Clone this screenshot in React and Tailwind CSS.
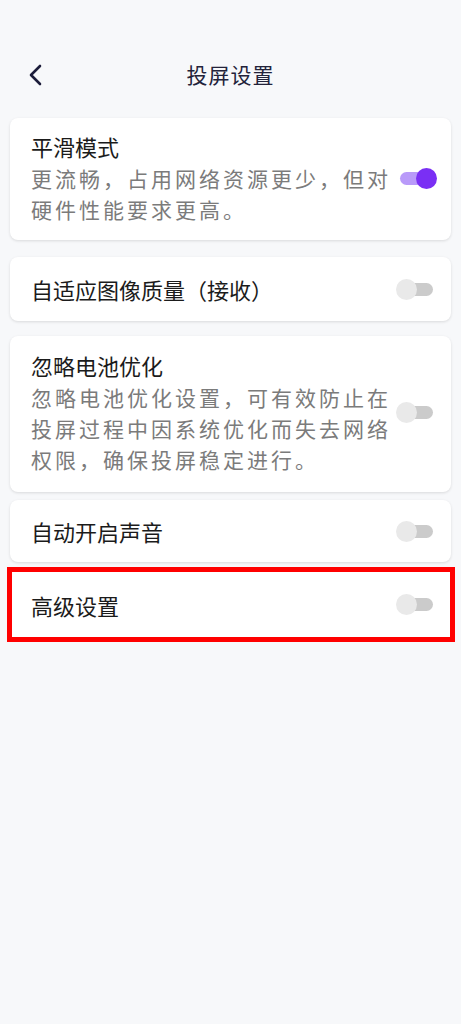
const FONT = { fontFamily: '"Noto Sans CJK SC", "Noto Sans", sans-serif' };

const SETTINGS = [
  {
    title: "平滑模式",
    lines: ["更流畅，占用网络资源更少，但对", "硬件性能要求更高。"],
    on: true,
    wrap: "mt-[18px] pt-[13px] pb-[15px]",
  },
  {
    title: "自适应图像质量（接收）",
    on: false,
    wrap: "mt-[17px] h-[64px]",
  },
  {
    title: "忽略电池优化",
    lines: ["忽略电池优化设置，可有效防止在", "投屏过程中因系统优化而失去网络", "权限，确保投屏稳定进行。"],
    on: false,
    wrap: "mt-[15px] pt-[14px] pb-[17px]",
  },
  {
    title: "自动开启声音",
    on: false,
    wrap: "mt-[8px] h-[62px]",
  },
];

function Toggle({ on }) {
  return (
    <div className="relative h-[21px] w-[41px] shrink-0">
      <div
        className={`absolute left-[4px] right-[4px] top-[4px] h-[13px] rounded-full ${
          on ? "bg-[#b99af9]" : "bg-[#cbcbcb]"
        }`}
      />
      <div
        className={`absolute top-0 h-[21px] w-[21px] rounded-full ${
          on ? "right-0 bg-[#7a2ff4]" : "left-0 bg-[#e9e9e9]"
        }`}
      />
    </div>
  );
}

function SettingCard({ item }) {
  return (
    <div
      className={`mx-[10px] flex items-center rounded-[8px] bg-white pl-[21px] pr-[14px] shadow-[0_1px_3px_rgba(0,0,0,0.12)] ${item.wrap}`}
    >
      <div className="flex-1">
        <div className="text-[22px] leading-[30px] text-[#1b1b1b]">{item.title}</div>
        {item.lines && (
          <div className="mt-[2px] whitespace-nowrap text-[21px] leading-[31px] tracking-[3px] text-[#7b7b7b]">
            {item.lines.map((l) => (
              <div key={l}>{l}</div>
            ))}
          </div>
        )}
      </div>
      <Toggle on={item.on} />
    </div>
  );
}

export default function App() {
  return (
    <div className="min-h-[1024px] w-full bg-[#f7f8fa] pt-[50px]" style={FONT}>
      <div className="relative flex h-[50px] items-center justify-center">
        <svg
          className="absolute left-[27px] top-[14px]"
          width="18"
          height="22"
          viewBox="0 0 18 22"
          fill="none"
        >
          <path d="M13 2 L4 11 L13 20" stroke="#1c1c3a" strokeWidth="2.6" strokeLinecap="round" strokeLinejoin="round" />
        </svg>
        <span className="text-[21px] tracking-[1px] text-[#23233a]">投屏设置</span>
      </div>

      {SETTINGS.map((s) => (
        <SettingCard key={s.title} item={s} />
      ))}

      <div className="relative mt-[10px]">
        <div className="mx-[10px] flex h-[65px] items-center bg-white pl-[21px] pr-[14px]">
          <div className="flex-1 text-[22px] leading-[30px] text-[#1b1b1b]">高级设置</div>
          <Toggle on={false} />
        </div>
        <div className="pointer-events-none absolute left-[7px] right-[6px] top-[-5px] bottom-[-5px] border-[5px] border-[#ff0000]" />
      </div>
    </div>
  );
}
